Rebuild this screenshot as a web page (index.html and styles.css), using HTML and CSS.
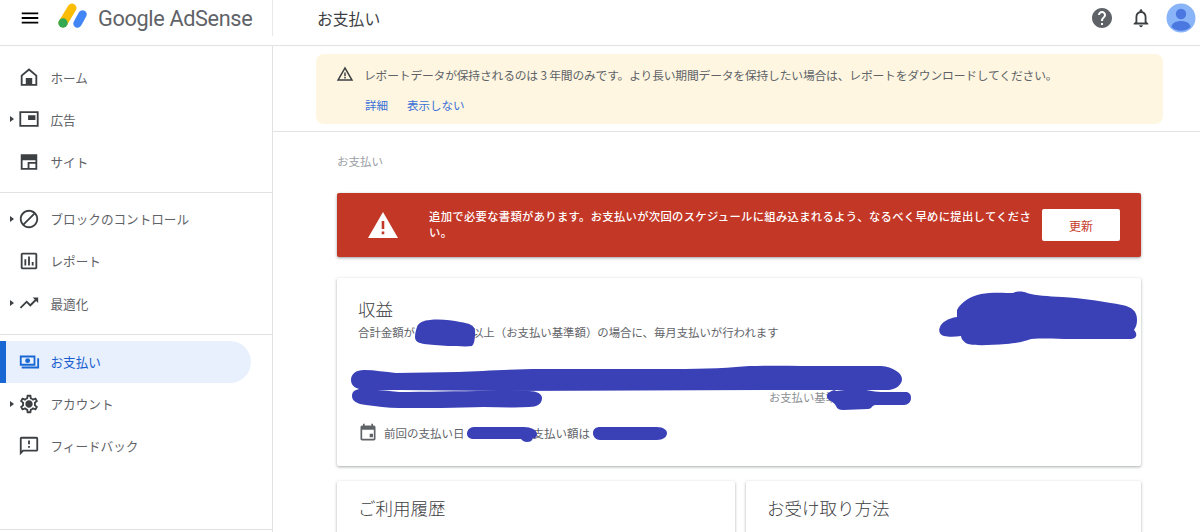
FILE: index.html
```html
<!DOCTYPE html>
<html lang="ja">
<head>
<meta charset="utf-8">
<title>お支払い - Google AdSense</title>
<link rel="stylesheet" href="styles.css">
</head>
<body>
<div class="app">
  <header class="topbar">
    <div class="brand">
      <button class="menu" aria-label="メニュー"><svg viewBox="0 0 24 24" width="22" height="22"><path d="M3 18h18v-2H3v2zm0-5h18v-2H3v2zm0-7v2h18V6H3z"/></svg></button>
      <svg class="logo" viewBox="0 0 34 28" width="34" height="28">
        <path d="M6 21 L15 6" stroke="#fbbc04" stroke-width="9" stroke-linecap="round" fill="none"/>
        <circle cx="6" cy="21" r="4.700" fill="#34a853"/>
        <path d="M20.500 21.500 L25.500 12.500" stroke="#4285f4" stroke-width="8.400" stroke-linecap="round" fill="none"/>
      </svg>
      <span class="wordmark">Google AdSense</span>
    </div>
    <h1 class="page-title">お支払い</h1>
    <div class="top-actions">
      <svg class="help" viewBox="0 0 24 24" width="24" height="24"><path fill="#5f6368" d="M12 2C6.480 2 2 6.480 2 12s4.480 10 10 10 10-4.480 10-10S17.520 2 12 2zm1 17h-2v-2h2v2zm2.070-7.750l-.9.920C13.450 12.900 13 13.500 13 15h-2v-.5c0-1.100.450-2.100 1.170-2.830l1.240-1.260c.370-.360.590-.860.590-1.410 0-1.100-.9-2-2-2s-2 .9-2 2H8c0-2.210 1.790-4 4-4s4 1.790 4 4c0 .880-.360 1.680-.930 2.250z"/></svg>
      <svg class="bell" viewBox="0 0 24 24" width="24" height="24"><path fill="#3c4043" d="M12 22c1.100 0 2-.9 2-2h-4c0 1.100.9 2 2 2zm6-6v-5c0-3.070-1.630-5.640-4.500-6.320V4c0-.830-.670-1.500-1.500-1.500s-1.500.670-1.500 1.500v.680C7.640 5.360 6 7.920 6 11v5l-2 2v1h16v-1l-2-2zm-2 1H8v-6c0-2.480 1.510-4.500 4-4.500s4 2.020 4 4.500v6z"/></svg>
      <svg class="avatar" viewBox="0 0 30 30" width="30" height="30"><circle cx="15" cy="15" r="14.500" fill="#8ab4f8"/><circle cx="15" cy="11" r="5.200" fill="#4a78e0"/><path d="M5.500 24c0-4 5-6 9.500-6s9.500 2 9.500 6a14 14 0 0 1-19 0z" fill="#4a78e0"/></svg>
    </div>
  </header>

  <div class="body">
    <nav class="sidebar">
      <ul class="nav-group first">
        <li class="nav-item"><span class="caret none"></span>
          <svg class="nav-icon" viewBox="0 0 24 24"><path fill-rule="evenodd" d="M12 2.500 3 10v11.500h18V10l-9-7.500zm7 17h-3.500V13h-7v6.500H5v-8.600l7-5.800 7 5.800v8.600z"/></svg><span>ホーム</span></li>
        <li class="nav-item"><span class="caret"></span>
          <svg class="nav-icon" viewBox="0 0 24 24"><path fill-rule="evenodd" d="M1.500 3.500h21v17h-21v-17zm2 2v13h17v-13h-17zM11 8h8v5h-8z"/></svg><span>広告</span></li>
        <li class="nav-item"><span class="caret none"></span>
          <svg class="nav-icon" viewBox="0 0 24 24"><path fill-rule="evenodd" d="M3 3.500h18v17H3v-17zM5 10v8.500h5.500V12H19v-2H5zm7.500 4v4.500H19V14h-6.500z"/></svg><span>サイト</span></li>
      </ul>
      <ul class="nav-group">
        <li class="nav-item"><span class="caret"></span>
          <svg class="nav-icon" viewBox="0 0 24 24"><path d="M12 2C6.480 2 2 6.480 2 12s4.480 10 10 10 10-4.480 10-10S17.520 2 12 2zM4 12c0-4.420 3.580-8 8-8 1.850 0 3.550.630 4.900 1.690L5.690 16.900A7.902 7.902 0 0 1 4 12zm8 8c-1.850 0-3.550-.630-4.900-1.690L18.310 7.100A7.902 7.902 0 0 1 20 12c0 4.420-3.580 8-8 8z"/></svg><span>ブロックのコントロール</span></li>
        <li class="nav-item"><span class="caret none"></span>
          <svg class="nav-icon" viewBox="0 0 24 24"><path d="M19 3H5c-1.100 0-2 .9-2 2v14c0 1.100.9 2 2 2h14c1.100 0 2-.9 2-2V5c0-1.100-.9-2-2-2zm0 16H5V5h14v14zM7 10h2v7H7zm4-3h2v10h-2zm4 6h2v4h-2z"/></svg><span>レポート</span></li>
        <li class="nav-item"><span class="caret"></span>
          <svg class="nav-icon" viewBox="0 0 24 24"><path d="m16 6 2.290 2.290-4.880 4.880-4-4L2 16.590 3.410 18l6-6 4 4 6.300-6.290L22 12V6z"/></svg><span>最適化</span></li>
      </ul>
      <ul class="nav-group last">
        <li class="nav-item active"><span class="caret none"></span>
          <svg class="nav-icon" viewBox="0 0 24 24"><path fill-rule="evenodd" d="M2 5h17v11H2V5zm2 2v7h13V7H4zm6.500.800a2.700 2.700 0 1 1 0 5.400 2.700 2.700 0 0 1 0-5.400zM21 8h2v11H4v-2h17V8z"/></svg><span>お支払い</span></li>
        <li class="nav-item"><span class="caret"></span>
          <svg class="nav-icon" viewBox="0 0 24 24"><path d="M19.430 12.980c.040-.320.070-.640.070-.980s-.030-.660-.070-.980l2.110-1.650c.190-.150.240-.420.120-.640l-2-3.460c-.120-.220-.390-.300-.610-.220l-2.490 1c-.520-.400-1.080-.730-1.690-.980l-.380-2.650C14.460 2.180 14.250 2 14 2h-4c-.250 0-.460.180-.490.420l-.380 2.650c-.610.250-1.170.590-1.690.980l-2.490-1c-.230-.090-.490 0-.610.220l-2 3.460c-.130.220-.070.490.120.640l2.110 1.650c-.040.320-.070.650-.070.980s.030.660.070.980l-2.110 1.650c-.190.150-.24.420-.12.640l2 3.460c.120.220.39.300.61.220l2.490-1c.52.400 1.080.730 1.690.980l.38 2.650c.03.240.24.420.49.420h4c.25 0 .46-.18.49-.42l.38-2.650c.61-.25 1.170-.59 1.690-.98l2.490 1c.23.09.49 0 .61-.22l2-3.460c.12-.22.07-.49-.12-.64l-2.110-1.650zM17.450 11.270c.04.31.05.52.05.73s-.02.43-.05.73l-.14 1.130.89.700 1.080.84-.7 1.210-1.270-.51-1.040-.42-.9.68c-.43.32-.84.56-1.250.73l-1.060.43-.16 1.130-.2 1.350h-1.400l-.19-1.350-.16-1.130-1.060-.43c-.43-.18-.83-.41-1.230-.71l-.91-.7-1.060.43-1.270.51-.7-1.210 1.080-.84.89-.7-.14-1.130c-.03-.31-.05-.54-.05-.74s.02-.43.05-.73l.14-1.130-.89-.7-1.080-.84.7-1.210 1.270.51 1.040.42.9-.68c.43-.32.84-.56 1.250-.73l1.060-.43.16-1.130.2-1.350h1.390l.19 1.350.16 1.130 1.060.43c.43.18.83.41 1.230.71l.91.7 1.060-.43 1.270-.51.7 1.210-1.070.85-.89.7.14 1.130zM12 8c-2.210 0-4 1.790-4 4s1.790 4 4 4 4-1.790 4-4-1.790-4-4-4z"/></svg><span>アカウント</span></li>
        <li class="nav-item"><span class="caret none"></span>
          <svg class="nav-icon" viewBox="0 0 24 24"><path d="M20 2H4c-1.100 0-2 .9-2 2v18l4-4h14c1.100 0 2-.9 2-2V4c0-1.100-.9-2-2-2zm0 14H5.170L4 17.170V4h16v12zM11 12h2v2h-2zm0-6h2v4h-2z"/></svg><span>フィードバック</span></li>
      </ul>
    </nav>

    <main class="main">
      <section class="notice-wrap">
        <div class="notice">
          <div class="notice-line">
            <svg class="notice-icon" viewBox="0 0 24 24" width="18" height="18"><path fill="#3c4043" d="M1 21h22L12 2 1 21zm3.470-2L12 6l7.530 13H4.470zM11 16h2v2h-2zm0-6h2v5h-2z"/></svg>
            <p>レポートデータが保持されるのは 3 年間のみです。より長い期間データを保持したい場合は、レポートをダウンロードしてください。</p>
          </div>
          <div class="notice-links"><a>詳細</a><a>表示しない</a></div>
        </div>
      </section>

      <div class="content">
        <div class="crumb">お支払い</div>

        <div class="alert">
          <svg class="alert-icon" viewBox="0 0 32 28" width="32" height="28"><path fill="#fff" fill-rule="evenodd" d="M16 1 31 27H1L16 1zm-1.300 9v8h2.600v-8h-2.600zm0 10.500v2.700h2.600v-2.700h-2.600z"/></svg>
          <p class="alert-text">追加で必要な書類があります。お支払いが次回のスケジュールに組み込まれるよう、なるべく早めに提出してください。</p>
          <button class="alert-btn">更新</button>
        </div>

        <div class="card earnings">
          <h2 class="card-title">収益</h2>
          <p class="earn-sub">合計金額が<span class="gap-a"></span>以上（お支払い基準額）の場合に、毎月支払いが行われます</p>
          <div class="threshold">お支払い基準額</div>
          <div class="last-pay">
            <svg viewBox="0 0 24 24" width="20" height="20"><path fill="#5f6368" d="M19 3h-1V1h-2v2H8V1H6v2H5c-1.110 0-2 .9-2 2v14c0 1.100.890 2 2 2h14c1.100 0 2-.9 2-2V5c0-1.100-.9-2-2-2zm0 16H5V8h14v11zm-5-6h4v4h-4z"/></svg>
            <span>前回の支払い日<span class="gap-b"></span>支払い額は</span>
          </div>
        </div>

        <div class="card-row">
          <div class="card half"><h2 class="card-title">ご利用履歴</h2></div>
          <div class="card half"><h2 class="card-title">お受け取り方法</h2></div>
        </div>
      </div>
    </main>
  </div>
</div>

<svg class="scribbles" viewBox="0 0 1200 532" width="1200" height="532" aria-hidden="true">
  <g fill="#3a41b7">
    <path d="M957 310C961 302 971 296 981 294C991 292 1006 293 1013 293C1017 291 1023 291 1027 293C1037 296 1047 296 1062 297C1082 298 1107 302 1122 305C1132 307 1137 311 1137 320C1137 326 1135 328 1134 330C1137 333 1138 338 1131 339L1071 339C1057 339 1047 338 1031 339C1023 342 1016 343 1006 344C991 345 976 346 968 344C963 342 961 338 961 336C955 337 948 337 944 336C940 335 938 331 940 327C941 323 948 318 957 317Z"/>
    <path d="M417 327c1-4 7-7 13-7 9-1 22 0 30 2 5 1 8 1 11 3 4 2 4 5 4 9 0 6-1 10-3 12-6 1-15 0-24 0-9-1-18-1-24-2-6-1-9-3-9-7 0-4 1-7 2-10z"/>
    <path d="M351 380C351 374 356 370 364 370C375 370 385 372 396 373L458 372C482 371 514 369 540 369L652 369C682 369 712 369 736 367C760 365 791 366 826 366L881 366C893 367 902 373 902 379C902 385 896 389 889 390L770 390L500 391L400 390C385 390 370 391 364 390C356 389 351 386 351 380Z"/>
    <path d="M352 396c0-5 4-7 9-7 12 0 25 2 38 3 25 0 60-1 90-1h40c8 0 13 3 13 7 0 6-5 9-13 9-14 1-30 0-45 0-25 1-60 1-85 1-12 0-22-2-33-3-9-1-14-4-14-9z"/>
    <path d="M836 391c5-1 12-1 21-2 9 0 15 3 24 3h26c3 1 4 3 4 6 0 4-3 7-7 7-8 0-20 0-29 0-4 1-3 4-7 4l-25 1c-3 0-6-1-7-4-1-2-3-4-7-6-3-2-3-7 1-8 2-2 6-2 6-1z"/>
    <path d="M467 434c0-4 3-7 7-7h50c7 0 13 3 13 7 0 3-2 5-4 4-1 3-3 4-6 4-3 0-5-2-6-3h-47c-4 0-7-2-7-5z"/>
    <path d="M593 433c0-4 3-6 7-6h57c6 0 10 3 10 6 0 4-4 7-10 7h-57c-4 0-7-3-7-7z"/>
  </g>
</svg>
```

FILE: styles.css
```css
* { box-sizing: border-box; }
html, body { margin: 0; height: 100%; overflow: hidden; background: #fff; }
body {
  font-family: "Noto Sans CJK JP", Roboto, "Liberation Sans", sans-serif;
  color: #3c4043;
  position: relative;
}
.app { width: 1200px; height: 532px; display: flex; flex-direction: column; overflow: hidden; }

/* top bar */
.topbar { height: 46px; flex: none; display: flex; align-items: center; padding-bottom: 9px; border-bottom: 1px solid #e1e2e4; }
.brand { width: 273px; height: 36px; flex: none; display: flex; align-items: center; border-right: 1px solid #e8e8ea; }
.menu { width: 22px; height: 22px; padding: 0; margin-left: 19px; border: 0; background: none; display: flex; }
.logo { margin-left: 16px; margin-top: -4px; }
.wordmark { margin-left: 7px; font: 400 21.700px Roboto, sans-serif; color: #5f6368; letter-spacing: -.35px; white-space: nowrap; }
.page-title { margin: 0 0 0 44px; font-size: 15.800px; font-weight: 400; color: #3c4043; }
.top-actions { margin-left: auto; display: flex; align-items: center; }
.help { margin-right: 16px; }
.bell { margin-right: 14px; width: 22px; }
.avatar { margin-right: 4px; }

/* layout */
.body { flex: 1; display: flex; min-height: 0; }
.sidebar { width: 273px; flex: none; border-right: 1px solid #e1e2e4; }
.nav-group { list-style: none; margin: 0; padding: 5px 0 9.100px; border-bottom: 1px solid #e1e2e4; }
.nav-group.first { padding-top: 10px; }
.nav-group.last { padding-top: 6px; height: 195px; }
.nav-item { height: 42.300px; display: flex; align-items: center; font-size: 12.600px; color: #5f6368; position: relative; width: 251px; }
.nav-group:not(.first) .nav-item:not(.active) { padding-bottom: 1px; }
.caret { width: 0; height: 0; margin-left: 10px; border-left: 4px solid #3c4043; border-top: 3.500px solid transparent; border-bottom: 3.500px solid transparent; flex: none; }
.caret.none { border-color: transparent; }
.nav-icon { width: 22px; height: 22px; margin: 0 10.500px 0 4px; fill: #3c4043; flex: none; }
.nav-item.active { height: 42px; color: #1a5fd0; background: #e8f0fe; border-radius: 0 22px 22px 0; }
.nav-item.active::before { content: ""; position: absolute; left: 0; top: 0; bottom: 0; width: 6px; background: #1967d2; }
.nav-item.active .nav-icon { fill: #1967d2; }

/* main */
.main { flex: 1; min-width: 0; }
.notice-wrap { padding: 8px 37px 7px 43px; border-bottom: 1px solid #e3e3e5; height: 86px; }
.notice { height: 70px; background: #fef6e0; border-radius: 8px; padding: 10px 20px; }
.notice-line { display: flex; align-items: center; height: 20px; }
.notice-icon { flex: none; margin-right: 10px; margin-left: 0; }
.notice-line p { margin: 0; font-size: 11.800px; letter-spacing: -.2px; color: #5f6368; white-space: nowrap; }
.notice-links { margin: 11px 0 0 29px; display: flex; gap: 19px; font-size: 11.500px; color: #3a6fd8; line-height: 20px; }

.content { padding: 0 59px 0 64px; }
.crumb { margin-top: 20px; font-size: 11.500px; color: #9aa0a6; line-height: 18px; height: 18px; }
.alert { margin-top: 23px; height: 64px; background: #c33727; border-radius: 2px; box-shadow: 0 1px 3px rgba(60,64,67,.5); display: flex; align-items: center; padding-right: 21px; }
.alert-icon { flex: none; margin: 0 30px 0 30px; }
.alert-text { margin: 0 0 2px; flex: 1; font-size: 11.330px; letter-spacing: .3px; font-weight: 500; color: #fff; line-height: 16px; }
.alert-btn { flex: none; width: 78px; height: 32px; margin-left: 8px; border: 0; border-radius: 2px; background: #fff; color: #c5392a; font: 400 12px "Noto Sans CJK JP", sans-serif; }

.card { background: #fff; border-radius: 2px; box-shadow: 0 1px 3px rgba(60,64,67,.45); }
.earnings { margin-top: 21px; height: 188px; padding: 18px 21px; position: relative; }
.card-title { margin: 0; font-size: 17.500px; font-weight: 300; color: #3c4043; line-height: 26px; }
.earn-sub { margin: 2px 0 0; font-size: 11.400px; color: #5f6368; line-height: 16px; white-space: nowrap; }
.gap-a { display: inline-block; width: 57px; }
.threshold { position: absolute; left: 432px; top: 111px; font-size: 11.300px; color: #8a8f94; line-height: 16px; }
.last-pay { display: flex; align-items: center; gap: 6px; margin-top: 83px; font-size: 11.500px; color: #5f6368; }
.gap-b { display: inline-block; width: 68px; }
.card-row { display: grid; grid-template-columns: 398px 395px; gap: 11px; margin-top: 15px; }
.half { height: 120px; padding: 14px 21px; }

.scribbles { position: absolute; left: 0; top: 0; pointer-events: none; }
```
